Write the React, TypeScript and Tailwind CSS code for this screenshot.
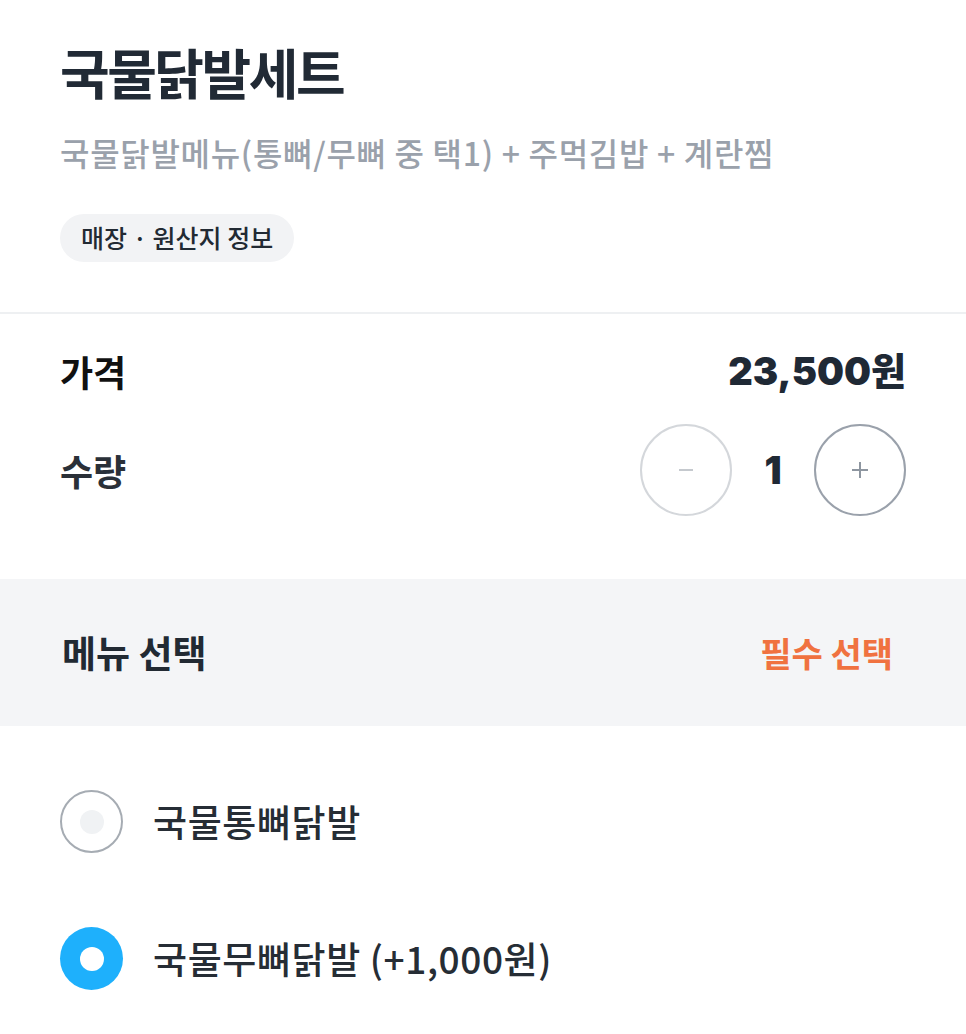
import React from 'react';

const font = { fontFamily: '"Noto Sans CJK KR", "Noto Sans", sans-serif' };
const numFont = { fontFamily: 'Inter, "Noto Sans CJK KR", sans-serif' };

function Radio({ checked, label }: { checked: boolean; label: string }) {
  return (
    <div className="flex items-center h-[137px] px-[60px]">
      {checked ? (
        <div className="w-[63px] h-[63px] rounded-full bg-[#1eb0fc] flex items-center justify-center">
          <div className="w-[24px] h-[24px] rounded-full bg-white" />
        </div>
      ) : (
        <div className="w-[63px] h-[63px] rounded-full border-2 border-[#a6acb3] flex items-center justify-center">
          <div className="w-[24px] h-[24px] rounded-full bg-[#f0f2f4]" />
        </div>
      )}
      <span className="ml-[30px] text-[37px] font-medium text-[#262d35] tracking-[0.6px]">{label}</span>
    </div>
  );
}

export default function App() {
  return (
    <div className="w-[966px] min-h-[1034px] bg-white" style={font}>
      <div className="px-[60px] pt-[36px] pb-[50px]">
        <h1 className="text-[54px] font-bold text-[#212a35] leading-[72px] tracking-[-2.5px]">국물닭발세트</h1>
        <p className="mt-[22px] text-[32px] font-medium text-[#9aa1ab] leading-[44px] tracking-[0.7px]">
          국물닭발메뉴(통뼈/무뼈 중 택1) + 주먹김밥 + 계란찜
        </p>
        <div className="mt-[40px] inline-flex items-center h-[48px] px-[21px] rounded-full bg-[#f2f3f5] text-[25px] font-medium text-[#222a33]">
          매장 · 원산지 정보
        </div>
      </div>

      <div className="h-[2px] bg-[#eef0f2]" />

      <div className="px-[60px] pt-[32px] pb-[63px]">
        <div className="flex items-center justify-between h-[50px]">
          <span className="text-[36px] font-bold text-[#111]">가격</span>
          <span className="text-[38px] font-black text-[#1f2935]" style={numFont}>
            23,500원
          </span>
        </div>
        <div className="flex items-center justify-between mt-[28px]">
          <span className="text-[36px] font-bold text-[#2a3038]">수량</span>
          <div className="flex items-center">
            <button className="w-[92px] h-[92px] rounded-full border-2 border-[#d4d7db] flex items-center justify-center">
              <span className="block w-[14px] h-[2px] bg-[#c5c9ce]" />
            </button>
            <span className="w-[82px] text-center text-[38px] font-black text-[#1f2935]" style={numFont}>1</span>
            <button className="w-[92px] h-[92px] rounded-full border-2 border-[#9aa1ab] flex items-center justify-center">
              <svg width="20" height="20" viewBox="0 0 20 20">
                <path d="M10 2v16M2 10h16" stroke="#8e96a0" strokeWidth="2" />
              </svg>
            </button>
          </div>
        </div>
      </div>

      <div className="h-[147px] bg-[#f4f5f7] flex items-center justify-between pl-[62px] pr-[73px]">
        <span className="text-[37px] font-bold text-[#222a33]">메뉴 선택</span>
        <span className="text-[34px] font-bold text-[#f07240]">필수 선택</span>
      </div>

      <div className="pt-[27px]">
        <Radio checked={false} label="국물통뼈닭발" />
        <Radio checked={true} label="국물무뼈닭발 (+1,000원)" />
      </div>
    </div>
  );
}
